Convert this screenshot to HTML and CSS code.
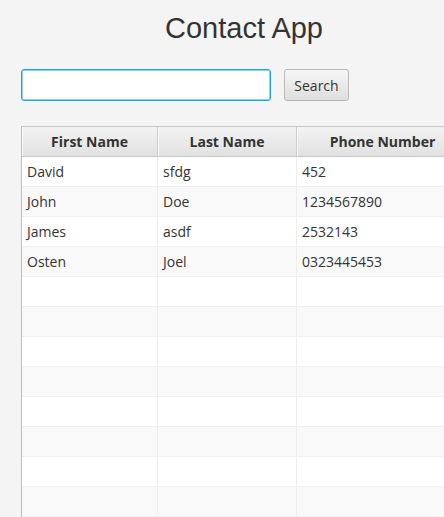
FILE: index.html
```html
<!DOCTYPE html>
<html>
<head>
<meta charset="utf-8">
<title>Contact App</title>
<link rel="stylesheet" href="styles.css">
</head>
<body>
<div class="app">
  <h1 class="title">Contact App</h1>
  <div class="search-row">
    <input class="search-field" type="text">
    <button class="search-btn">Search</button>
  </div>
  <div class="table">
    <div class="row header">
      <div class="cell">First Name</div>
      <div class="cell">Last Name</div>
      <div class="cell">Phone Number</div>
    </div>
    <div class="row"><div class="cell">David</div><div class="cell">sfdg</div><div class="cell">452</div></div>
    <div class="row odd"><div class="cell">John</div><div class="cell">Doe</div><div class="cell">1234567890</div></div>
    <div class="row"><div class="cell">James</div><div class="cell">asdf</div><div class="cell">2532143</div></div>
    <div class="row odd"><div class="cell">Osten</div><div class="cell">Joel</div><div class="cell">0323445453</div></div>
    <div class="row"><div class="cell"></div><div class="cell"></div><div class="cell"></div></div>
    <div class="row odd"><div class="cell"></div><div class="cell"></div><div class="cell"></div></div>
    <div class="row"><div class="cell"></div><div class="cell"></div><div class="cell"></div></div>
    <div class="row odd"><div class="cell"></div><div class="cell"></div><div class="cell"></div></div>
    <div class="row"><div class="cell"></div><div class="cell"></div><div class="cell"></div></div>
    <div class="row odd"><div class="cell"></div><div class="cell"></div><div class="cell"></div></div>
    <div class="row"><div class="cell"></div><div class="cell"></div><div class="cell"></div></div>
    <div class="row odd"><div class="cell"></div><div class="cell"></div><div class="cell"></div></div>
  </div>
</div>
</body>
</html>
```
FILE: styles.css
```css
html, body {
  margin: 0;
  padding: 0;
  background: #f4f4f4;
  overflow: hidden;
  height: 517px;
}
.app {
  width: 488px;
  font-family: "Open Sans", "Noto Sans", sans-serif;
  color: #333333;
}
.title {
  margin: 11px 0 0 0;
  height: 34px;
  line-height: 34px;
  font-family: "Liberation Sans", Arial, sans-serif;
  font-weight: normal;
  font-size: 29px;
  color: #333333;
  text-align: center;
}
.search-row {
  display: flex;
  align-items: flex-start;
  gap: 13px;
  margin: 24px 0 0 21px;
}
.search-field {
  box-sizing: border-box;
  width: 250px;
  height: 32px;
  margin: 0;
  border: 1px solid #1fa3dc;
  border-radius: 3px;
  background: #ffffff;
  box-shadow: inset 0 0 0 1px #8fd0ee;
  outline: none;
}
.search-btn {
  box-sizing: border-box;
  width: 65px;
  height: 32px;
  margin: 0;
  padding: 0;
  border: 1px solid #b9b9b9;
  border-radius: 3px;
  background: linear-gradient(to bottom, #f6f6f6, #dedede);
  font-family: "Open Sans", "Noto Sans", sans-serif;
  font-size: 14px;
  color: #333333;
}
.table {
  width: 448px;
  margin: 25px 0 0 21px;
  border-left: 1px solid #bdbdbd;
  border-top: 1px solid #c4c4c4;
  background: #ffffff;
}
.row {
  display: grid;
  grid-template-columns: 136px 139px 172px;
  height: 30px;
  box-sizing: border-box;
  border-bottom: 1px solid #f0f0f0;
  background: #ffffff;
}
.row.odd {
  background: #f9f9f9;
}
.cell {
  box-sizing: border-box;
  border-right: 1px solid #ededed;
  padding: 0 5px;
  font-size: 14px;
  line-height: 29px;
  white-space: nowrap;
  overflow: hidden;
}
.row.header {
  background: linear-gradient(to bottom, #f3f3f3, #e1e1e1);
  border-bottom: 1px solid #c8c8c8;
}
.row.header .cell {
  text-align: center;
  font-weight: bold;
  border-right: 1px solid #cdcdcd;
  box-shadow: inset 1px 0 0 #f8f8f8;
}
```
